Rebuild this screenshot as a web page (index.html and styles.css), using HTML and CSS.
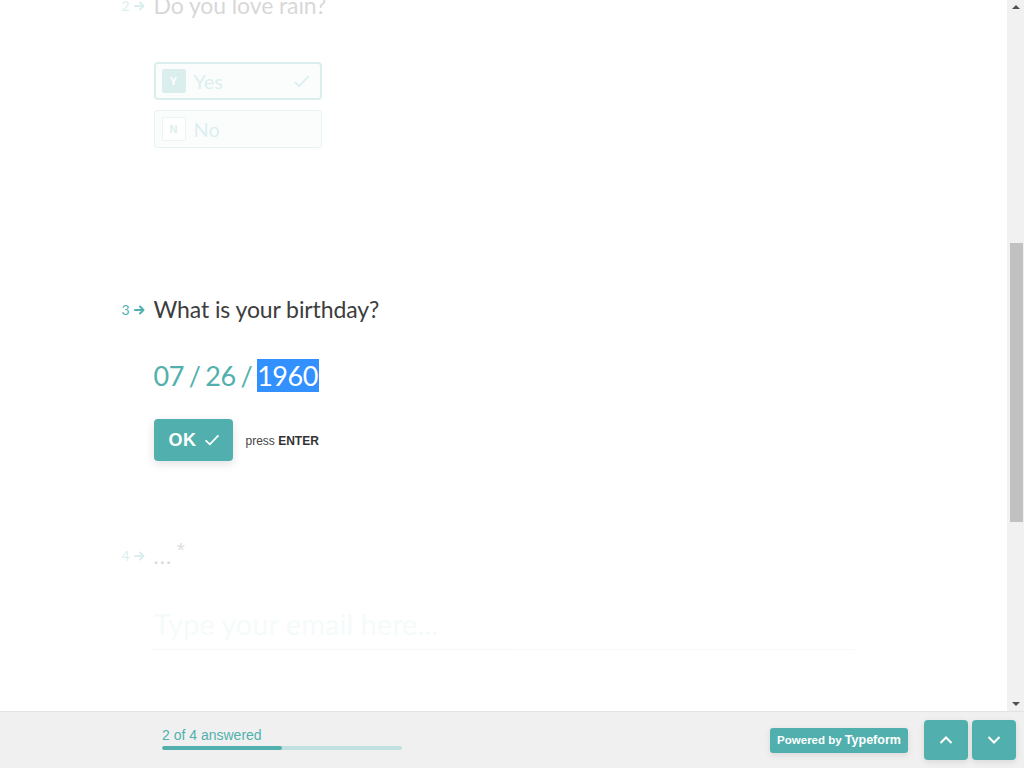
FILE: index.html
```html
<!DOCTYPE html>
<html lang="en">
<head>
<meta charset="utf-8">
<title>Typeform</title>
<link rel="stylesheet" href="styles.css">
</head>
<body>
<div class="app">
  <div class="top">
    <div class="scroller" id="scroller">
      <div class="form">
        <section class="question q1 faded">
          <div class="q-head">
            <span class="num">1<svg class="arrow" viewBox="0 0 12 10"><path d="M1 5h8M6 1.5 9.5 5 6 8.5" fill="none" stroke="currentColor" stroke-width="2" stroke-linecap="round" stroke-linejoin="round"/></svg></span>
            <h2 class="q-title">What's your name?</h2>
          </div>
        </section>

        <section class="question q2 faded">
          <div class="q-head">
            <span class="num">2<svg class="arrow" viewBox="0 0 12 10"><path d="M1 5h8M6 1.5 9.5 5 6 8.5" fill="none" stroke="currentColor" stroke-width="2" stroke-linecap="round" stroke-linejoin="round"/></svg></span>
            <h2 class="q-title">Do you love rain?</h2>
          </div>
          <div class="choices">
            <div class="choice selected">
              <span class="key">Y</span>
              <span class="label">Yes</span>
              <svg class="tick" viewBox="0 0 18 14"><path d="M1.5 7.5 6.5 12 16.5 1.5" fill="none" stroke="currentColor" stroke-width="1.8"/></svg>
            </div>
            <div class="choice">
              <span class="key">N</span>
              <span class="label">No</span>
            </div>
          </div>
        </section>

        <section class="question q3">
          <div class="q-head">
            <span class="num">3<svg class="arrow" viewBox="0 0 12 10"><path d="M1 5h8M6 1.5 9.5 5 6 8.5" fill="none" stroke="currentColor" stroke-width="2" stroke-linecap="round" stroke-linejoin="round"/></svg></span>
            <h2 class="q-title">What is your birthday?</h2>
          </div>
          <div class="date">07 / 26 / <span class="sel">1960</span></div>
          <div class="actions">
            <button class="ok">OK<svg class="ok-tick" viewBox="0 0 18 14"><path d="M1.5 7.5 6.5 12 16.5 1.5" fill="none" stroke="currentColor" stroke-width="2"/></svg></button>
            <span class="hint">press <b>ENTER</b></span>
          </div>
        </section>

        <section class="question q4 faded">
          <div class="q-head">
            <span class="num">4<svg class="arrow" viewBox="0 0 12 10"><path d="M1 5h8M6 1.5 9.5 5 6 8.5" fill="none" stroke="currentColor" stroke-width="2" stroke-linecap="round" stroke-linejoin="round"/></svg></span>
            <h2 class="q-title ellip"><span class="dots">...</span><span class="req">*</span></h2>
          </div>
          <div class="email">Type your email here...</div>
        </section>
      </div>
    </div>
    <div class="scrollbar" aria-hidden="true">
      <span class="sb-arrow up"></span>
      <div class="sb-track"><div class="sb-thumb"></div></div>
      <span class="sb-arrow down"></span>
    </div>
  </div>

  <footer class="footer">
    <div class="progress">
      <div class="progress-text">2 of 4 answered</div>
      <div class="bar"><div class="fill" style="width:50%"></div></div>
    </div>
    <div class="right">
      <a class="badge"><span class="pw">Powered by </span><strong>Typeform</strong></a>
      <div class="nav">
        <button class="nav-btn" aria-label="Previous"><svg viewBox="0 0 14 8"><path d="M1.5 7 7 1.5 12.5 7" fill="none" stroke="#fff" stroke-width="2"/></svg></button>
        <button class="nav-btn" aria-label="Next"><svg viewBox="0 0 14 8"><path d="M1.5 1 7 6.5 12.5 1" fill="none" stroke="#fff" stroke-width="2"/></svg></button>
      </div>
    </div>
  </footer>
</div>
<script src="script.js"></script>
</body>
</html>
```

FILE: styles.css
```css
* { box-sizing: border-box; }
html, body { margin: 0; padding: 0; height: 100%; overflow: hidden; background: #fff; }
body { font-family: "Lato", "Liberation Sans", sans-serif; color: #3d3d3d; }

.app { display: flex; flex-direction: column; height: 768px; }

.top { display: flex; height: 711px; flex: none; }

.scroller {
  flex: 1;
  height: 711px;
  overflow: hidden;
  background: #fff;
}

.scrollbar {
  width: 17px;
  flex: none;
  background: #f1f1f1;
  display: flex;
  flex-direction: column;
  align-items: center;
}
.sb-arrow { width: 0; height: 0; border-left: 4px solid transparent; border-right: 4px solid transparent; flex: none; }
.sb-arrow.up { border-bottom: 4px solid #505050; margin: 5px 0 8px; }
.sb-arrow.down { border-top: 4px solid #505050; margin: 8px 0 5px; }
.sb-track { flex: 1; width: 100%; padding-top: 226px; display: flex; justify-content: center; }
.sb-thumb { width: 13px; height: 279px; background: #c1c1c1; margin-left: 1px; }

.form {
  width: 702px;
  margin: 0 auto;
  padding-top: 200px;
  padding-bottom: 499px;
}

.question { display: flex; flex-direction: column; align-items: flex-start; padding-left: 1px; }
.faded { opacity: 0.2; }

.q1 { height: 363px; }

.q-head { display: flex; align-items: center; margin-left: -32px; height: 32px; }
.num {
  width: 32px;
  display: flex;
  align-items: center;
  font-size: 14px;
  color: #51b0ae;
  padding-top: 1px;
}
.arrow { width: 12px; height: 10px; margin-left: 4px; }
.q-title {
  margin: 0;
  font-weight: 400;
  font-size: 23px;
  line-height: 32px;
  color: #3d3d3d;
  letter-spacing: -0.1px;
}
.q2 .q-head { margin-top: 2px; }

.choices { margin-top: 41px; display: flex; flex-direction: column; gap: 10px; }
.choice {
  width: 168px;
  height: 38px;
  border: 1px solid rgba(81,176,174,0.6);
  background: rgba(81,176,174,0.1);
  border-radius: 4px;
  display: flex;
  align-items: center;
  padding-left: 7px;
  color: #51b0ae;
}
.choice.selected { border: 2px solid #51b0ae; padding-left: 6px; }
.key {
  width: 24px;
  height: 24px;
  border: 1px solid rgba(81,176,174,0.6);
  background: #fff;
  border-radius: 2px;
  display: flex;
  align-items: center;
  justify-content: center;
  font-family: "Liberation Sans", sans-serif;
  font-weight: 700;
  font-size: 11px;
  color: #51b0ae;
}
.selected .key { background: #51b0ae; border-color: #51b0ae; color: #fff; }
.label { margin-left: 8px; font-size: 20px; }
.tick { width: 17px; height: 13px; margin-left: auto; margin-right: 10px; }

.q2 { height: 306px; }

.date {
  margin-top: 32px;
  font-size: 27px;
  line-height: 37px;
  color: #51b0ae;
  letter-spacing: -0.5px;
  word-spacing: -1.5px;
}
.sel { background: #3390ff; color: #fff; padding: 0 1px 0 0; }

.actions { margin-top: 25px; display: flex; align-items: center; }
.ok {
  width: 79px;
  height: 42px;
  border: 0;
  border-radius: 4px;
  background: #51b0ae;
  color: #fff;
  font-family: "Liberation Sans", sans-serif;
  font-weight: 700;
  font-size: 18px;
  display: flex;
  align-items: center;
  justify-content: center;
  gap: 7px;
  padding: 0 0 0 2px;
  box-shadow: 0 3px 10px rgba(0,0,0,0.12);
  letter-spacing: 0.5px;
}
.ok-tick { width: 16px; height: 12px; }
.hint { margin-left: 13px; font-family: "Liberation Sans", sans-serif; font-size: 12px; color: #444; padding-top: 2px; }
.hint b { color: #333; }

.q3 { height: 246px; }

.ellip { display: flex; align-items: flex-start; height: 32px; }
.dots { font-size: 22px; color: #444; letter-spacing: 1px; line-height: 34px; }
.req { font-family: "Liberation Sans", sans-serif; font-size: 20px; color: #555; margin-left: 5px; line-height: 22px; }

.email {
  margin-top: 34px;
  width: 703px;
  margin-left: -2px;
  padding-left: 2px;
  height: 45px;
  font-size: 29px;
  line-height: 38px;
  color: rgba(81,176,174,0.3);
  border-bottom: 1px solid rgba(81,176,174,0.3);
}

.footer {
  flex: 1;
  background: #f0f0f0;
  border-top: 1px solid #e3e3e3;
  display: flex;
  align-items: center;
  justify-content: space-between;
  padding: 0 8px 0 162px;
  font-family: "Liberation Sans", sans-serif;
}
.progress { display: flex; flex-direction: column; padding-bottom: 3px; }
.progress-text { font-size: 14px; color: #51b0ae; line-height: 16px; }
.bar { width: 240px; height: 4px; border-radius: 2px; background: #c1e0df; margin-top: 3px; overflow: hidden; }
.fill { height: 100%; background: #51b0ae; border-radius: 2px; }

.right { display: flex; align-items: center; }
.badge {
  height: 25px;
  width: 138px;
  background: #51b0ae;
  color: #fff;
  font-weight: 700;
  border-radius: 3px;
  display: flex;
  align-items: center;
  justify-content: center;
  box-shadow: 0 2px 6px rgba(0,0,0,0.1);
  margin-right: 16px;
  white-space: pre;
}
.pw { font-size: 11.5px; }
.badge strong { font-weight: 700; font-size: 12.5px; }
.nav { display: flex; gap: 4px; }
.nav-btn {
  width: 44px;
  height: 40px;
  border: 0;
  border-radius: 4px;
  background: #51b0ae;
  display: flex;
  align-items: center;
  justify-content: center;
  padding: 0;
  box-shadow: 0 2px 6px rgba(0,0,0,0.1);
}
.nav-btn svg { width: 14px; height: 8px; }
```

FILE: script.js
```js
document.getElementById('scroller').scrollTop = 576;
```
